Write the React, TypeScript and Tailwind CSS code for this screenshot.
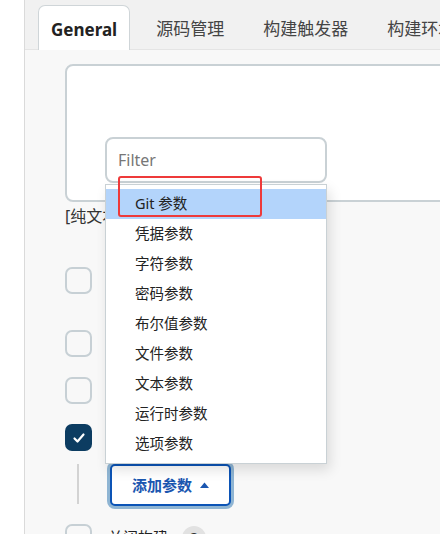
import type { FC } from "react";

const items = [
	"Git 参数",
	"凭据参数",
	"字符参数",
	"密码参数",
	"布尔值参数",
	"文件参数",
	"文本参数",
	"运行时参数",
	"选项参数",
];

const Checkbox: FC<{ checked?: boolean }> = ({ checked }) =>
	checked ? (
		<div className="flex h-[27px] w-[27px] shrink-0 items-center justify-center rounded-[7px] bg-[#0c3c61]">
			<svg width="14" height="14" viewBox="0 0 14 14" fill="none">
				<path
					d="M2.5 7.5l3 3 6-7"
					stroke="white"
					strokeWidth="2.2"
					strokeLinecap="round"
					strokeLinejoin="round"
				/>
			</svg>
		</div>
	) : (
		<div className="h-[27px] w-[27px] shrink-0 rounded-[7px] border-2 border-[#c7d0d5]" />
	);

export default function App() {
	return (
		<div
			className="flex h-[534px] w-[440px] overflow-hidden bg-white text-[#222]"
			style={{ fontFamily: '"Noto Sans", "Noto Sans CJK SC", sans-serif' }}
		>
			<div className="w-[25px] shrink-0 border-r border-[#dadada] bg-white" />
			<div className="relative flex min-w-0 flex-1 flex-col">
				{/* tabs */}
				<div className="flex h-[50px] shrink-0 gap-[13px] border-b border-[#e4e4e4] bg-[#f1f1f1] pl-[13px] pt-[5px]">
					<div className="-mb-px flex items-center rounded-t-[7px] border border-b-0 border-[#cfd5d8] bg-white px-[12px] pt-[3px] text-[17px] font-bold text-[#222]">
						General
					</div>
					{["源码管理", "构建触发器", "构建环境"].map((t) => (
						<div
							key={t}
							className="flex shrink-0 items-center px-[13px] pt-[3px] text-[17px] text-[#444]"
						>
							{t}
						</div>
					))}
				</div>

				{/* form */}
				<div className="flex-1 bg-[#f8f8f8] pl-[40px] pt-[14px]">
					<div className="h-[138px] w-[420px] rounded-[8px] border-2 border-[#c9d1d5] bg-white" />
					<div className="mt-[3px] h-[22px] text-[16px] leading-[22px] text-[#333]">
						[纯文本]
					</div>

					<div className="mt-[40px] flex items-center">
						<Checkbox />
					</div>
					<div className="mt-[36px] flex items-center">
						<Checkbox />
					</div>
					<div className="mt-[20px] flex items-center">
						<Checkbox />
					</div>
					<div className="mt-[20px] flex items-center">
						<Checkbox checked />
					</div>

					<div className="mt-[13px] flex items-start">
						<div className="ml-[12px] h-[40px] w-[2px] bg-[#d3d3d3]" />
						<button
							type="button"
							className="ml-[31px] flex h-[42px] items-center gap-[8px] rounded-[5px] border-2 border-[#0c54b6] bg-white px-[20px] text-[15px] font-bold text-[#1a56b0] shadow-[0_0_0_3px_#8fb5d3]"
						>
							添加参数
							<svg width="9" height="6" viewBox="0 0 9 6">
								<path d="M0 6L4.5 0.5L9 6Z" fill="#1a56b0" />
							</svg>
						</button>
					</div>

					<div className="mt-[18px] flex items-center gap-[16px]">
						<Checkbox />
						<span className="text-[15px]">关闭构建</span>
						<span className="-ml-[2px] flex h-[24px] w-[24px] items-center justify-center rounded-full bg-[#e2e2e2] text-[13px] font-bold text-[#333]">
							?
						</span>
					</div>
				</div>

				{/* dropdown menu overlay */}
				<div className="absolute left-[80px] top-[137px] w-[222px]">
					<div className="flex h-[46px] items-center rounded-[8px] border-2 border-[#c9d1d5] bg-white pl-[11px] text-[16px] text-[#777]">
						Filter
					</div>
					<div className="mt-px border border-[#c9d1d5] bg-white py-[4px] shadow-[3px_6px_12px_rgba(0,0,0,0.12)]">
						{items.map((it, i) => (
							<div
								key={it}
								className={`flex h-[30px] items-center pl-[29px] text-[14.5px] text-[#222] ${
									i === 0 ? "bg-[#b3d4fb]" : ""
								}`}
							>
								{it}
							</div>
						))}
					</div>
				</div>

				{/* red highlight annotation */}
				<div className="absolute left-[93px] top-[176px] h-[41px] w-[144px] rounded-[3px] border-2 border-[#ee3a3a]" />
			</div>
		</div>
	);
}
